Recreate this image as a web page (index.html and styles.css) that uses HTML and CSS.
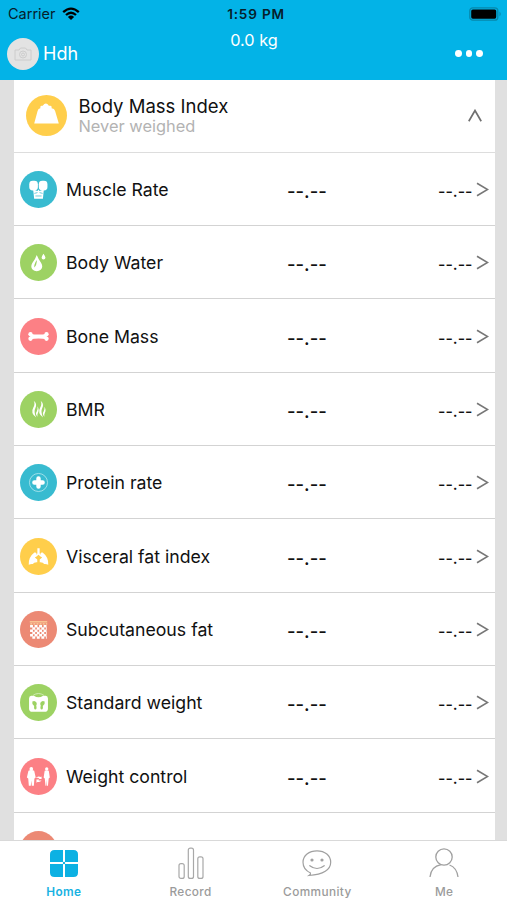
FILE: index.html
```html
<!DOCTYPE html>
<html lang="en">
<head>
    <meta charset="UTF-8">
    <meta name="viewport" content="width=device-width, initial-scale=1.0">
    <title>Home</title>
    <link rel="stylesheet" href="styles.css">
</head>
<body>
    <header class="header">
        <div class="status-bar">
            <div class="carrier">
                <span>Carrier</span>
                <svg width="18" height="14" viewBox="0 0 18 14">
                    <path d="M1.2 5.2 Q9 -2 16.8 5.2 M4 8 Q9 3.4 14 8" fill="none" stroke="#000" stroke-width="2.3"/>
                    <path d="M9 13 L5.9 9.9 Q9 7.3 12.1 9.9 Z"/>
                </svg>
            </div>
            <span class="time">1:59 PM</span>
            <svg class="battery" width="33" height="14" viewBox="0 0 33 14">
                <rect x=".8" y=".8" width="28" height="12.4" rx="3" fill="none" stroke="#0788ac" stroke-width="1.3"/>
                <rect x="2.2" y="2.4" width="25" height="9.3" rx="1.6"/>
                <path d="M30.5 4.5 Q33 7 30.5 9.5 Z" fill="#0788ac"/>
            </svg>
        </div>
        <div class="top-bar">
            <div class="user">
                <div class="avatar">
                    <svg width="18" height="14" viewBox="0 0 18 14" fill="none" stroke="#ccc">
                        <path d="M1 3 H5 L6.5 1 H11.5 L13 3 H17 V13 H1 Z"/>
                        <circle cx="9" cy="7.5" r="3.5"/>
                        <circle cx="9" cy="7.5" r="1.5"/>
                    </svg>
                </div>
                <span class="name">Hdh</span>
            </div>
            <span class="weight">0.0 kg</span>
            <div class="more"><i></i><i></i><i></i></div>
        </div>
    </header>

    <main class="content">
        <div class="card">
            <div class="summary">
                <svg class="summary-icon" viewBox="0 0 40 40">
                    <circle cx="20" cy="20" r="20" fill="#ffce4b"/>
                    <path d="M8 27.8 L11.3 15.5 Q11.8 13.2 14 13 V11.8 Q14 10.5 15.5 10.5 H16.3 Q19.5 6 22.3 10.5 H23.5 Q25 10.5 25 11.8 V13 Q27.8 13.2 28.4 15.5 L32 27.8 Z" fill="#fff"/>
                </svg>
                <div class="summary-text">
                    <h1>Body Mass Index</h1>
                    <p>Never weighed</p>
                </div>
                <svg class="arrow-up" width="14" height="13" viewBox="0 0 14 13">
                    <path d="M.8 12.2 L7 1.5 L13.2 12.2" fill="none" stroke="#707070" stroke-width="1.7"/>
                </svg>
            </div>
            <ul class="list" id="list">
                <li class="row">
                    <svg class="icon" viewBox="0 0 36 36">
                        <circle cx="18" cy="18" r="18" fill="#38bbd0"/>
                        <g fill="#fff">
                            <rect x="9" y="9.5" width="8.4" height="9.5" rx="3.4"/>
                            <rect x="18.3" y="9.5" width="8.4" height="9.5" rx="3.4"/>
                            <path d="M12.8 18 L17 19.5 L18 18 L19 19.5 L23.2 18 L22.3 27 H13.8 Z"/>
                        </g>
                        <path d="M14 21.8 L17 21 M19 21 L22 21.8 M15 24.3 H21" stroke="#38bbd0" stroke-width=".7"/>
                    </svg>
                    <span class="label">Muscle Rate</span>
                    <span class="value">--.--</span>
                    <span class="status">--.--</span>
                    <svg class="arrow" viewBox="0 0 13 15"><path d="M1 1.2 L11.6 7.5 L1 13.8"/></svg>
                </li>
                <li class="row">
                    <svg class="icon" viewBox="0 0 36 36">
                        <circle cx="18" cy="18" r="18" fill="#9dd263"/>
                        <path d="M16.3 10.7 Q18 15 20.6 18.5 C23.2 22.5 20.5 26.5 16.3 26.5 C12 26.5 9.5 22.5 12 18.5 Q14.8 15 16.3 10.7 Z M22.8 9.5 Q24.8 12.2 24.8 13.3 Q24.6 15 22.8 15 Q21.1 15 21 13.3 Q21 12.2 22.8 9.5 Z" fill="#fff"/>
                        <path d="M16.3 15.5 V17.5 Q16 21.5 14 22.8 Q13.3 20 16.3 15.5" fill="#9dd263"/>
                    </svg>
                    <span class="label">Body Water</span>
                    <span class="value">--.--</span>
                    <span class="status">--.--</span>
                    <svg class="arrow" viewBox="0 0 13 15"><path d="M1 1.2 L11.6 7.5 L1 13.8"/></svg>
                </li>
                <li class="row">
                    <svg class="icon" viewBox="0 0 36 36">
                        <circle cx="18" cy="18" r="18" fill="#fc8085"/>
                        <path d="M10 15.3 Q18 17 26 15.3 V20.7 Q18 19.4 10 20.7 Z" fill="#fff"/>
                        <g fill="#fff">
                            <circle cx="10.2" cy="15.8" r="2.1"/>
                            <circle cx="10.2" cy="20.2" r="2.1"/>
                            <circle cx="25.8" cy="15.8" r="2.1"/>
                            <circle cx="25.8" cy="20.2" r="2.1"/>
                        </g>
                    </svg>
                    <span class="label">Bone Mass</span>
                    <span class="value">--.--</span>
                    <span class="status">--.--</span>
                    <svg class="arrow" viewBox="0 0 13 15"><path d="M1 1.2 L11.6 7.5 L1 13.8"/></svg>
                </li>
                <li class="row">
                    <svg class="icon" viewBox="0 0 36 36">
                        <circle cx="18" cy="18" r="18" fill="#9dd263"/>
                        <g fill="#fff">
                            <path d="M13.3 9.5 Q17 12.5 15 16.5 Q13 20 15.8 25.8 Q9.8 21.5 13 16 Q15 12.5 13.3 9.5 Z"/>
                            <path d="M17 14.8 Q19 18.5 17.6 21 Q16.6 22.8 17 25 Q14.5 22.5 16.3 20 Q17.6 17.8 17 14.8 Z"/>
                            <path d="M20 9.5 Q23.7 12.5 21.7 16.5 Q19.7 20 22.5 25.8 Q16.5 21.5 19.7 16 Q21.7 12.5 20 9.5 Z"/>
                            <path d="M23.7 15.3 Q25.7 18.5 24.3 21 Q23.3 22.8 23.7 25 Q21.2 22.5 23 20 Q24.3 17.8 23.7 15.3 Z"/>
                        </g>
                    </svg>
                    <span class="label">BMR</span>
                    <span class="value">--.--</span>
                    <span class="status">--.--</span>
                    <svg class="arrow" viewBox="0 0 13 15"><path d="M1 1.2 L11.6 7.5 L1 13.8"/></svg>
                </li>
                <li class="row">
                    <svg class="icon" viewBox="0 0 36 36">
                        <circle cx="18" cy="18" r="18" fill="#38bbd0"/>
                        <circle cx="18" cy="18" r="8.8" fill="none" stroke="#c5edf3" stroke-width=".7"/>
                        <path d="M18 14 V22 M14 18 H22" stroke="#fff" stroke-width="4.3" stroke-linecap="round"/>
                    </svg>
                    <span class="label">Protein rate</span>
                    <span class="value">--.--</span>
                    <span class="status">--.--</span>
                    <svg class="arrow" viewBox="0 0 13 15"><path d="M1 1.2 L11.6 7.5 L1 13.8"/></svg>
                </li>
                <li class="row">
                    <svg class="icon" viewBox="0 0 36 36">
                        <circle cx="18" cy="18" r="18" fill="#ffce4b"/>
                        <path d="M16.9 10 H19.1 V15 L21.5 18 L20.8 18.7 L18 16.3 L15.2 18.7 L14.5 18 L16.9 15 Z" fill="#fff"/>
                        <path d="M14 14.2 Q16.6 13.6 16 17 L14.5 19 L16.8 21 V23.7 Q13.5 23.5 12.5 25.3 Q10.5 25 8.5 26 Q8.2 18.5 14 14.2 Z M22 14.2 Q19.4 13.6 20 17 L21.5 19 L19.2 21 V23.7 Q22.5 23.5 23.5 25.3 Q25.5 25 27.5 26 Q27.8 18.5 22 14.2 Z" fill="#fff"/>
                    </svg>
                    <span class="label">Visceral fat index</span>
                    <span class="value">--.--</span>
                    <span class="status">--.--</span>
                    <svg class="arrow" viewBox="0 0 13 15"><path d="M1 1.2 L11.6 7.5 L1 13.8"/></svg>
                </li>
                <li class="row">
                    <svg class="icon" viewBox="0 0 36 36">
                        <circle cx="18" cy="18" r="18" fill="#ec8974"/>
                        <path d="M9.5 10.5 H26.5" stroke="#f8c392" stroke-width="1.5"/>
                        <path d="M10 12.5 H26.5" stroke="#f8c392" stroke-width="1.7" stroke-dasharray="2 1"/>
                        <g stroke="#fff" stroke-width="2.5" stroke-dasharray="2.8 1.6">
                            <path d="M9.8 14.8 H26.5 M9.8 19.2 H26.5 M9.8 23.6 H26.5"/>
                            <path d="M12 17 H26 M12 21.4 H26 M12 25.8 H26"/>
                        </g>
                    </svg>
                    <span class="label">Subcutaneous fat</span>
                    <span class="value">--.--</span>
                    <span class="status">--.--</span>
                    <svg class="arrow" viewBox="0 0 13 15"><path d="M1 1.2 L11.6 7.5 L1 13.8"/></svg>
                </li>
                <li class="row">
                    <svg class="icon" viewBox="0 0 36 36">
                        <circle cx="18" cy="18" r="18" fill="#9dd263"/>
                        <path d="M11 11.5 H13.5 Q18 14.5 22.5 11.5 H25 Q27.2 11.5 27.2 14 V24 Q27.2 27 24 27 H12 Q8.8 27 8.8 24 V14 Q8.8 11.5 11 11.5 Z" fill="#fff"/>
                        <path d="M12.8 11 Q18 7.5 23.2 11" fill="none" stroke="#d8efc2" stroke-width=".8"/>
                        <path d="M12 17 Q14.5 15.5 16 18 Q16.8 19.5 15.8 21 Q16.8 24.8 14.8 24.8 Q13.3 24.8 13.8 21.5 Q11.3 19.5 12 17 Z M24 17 Q21.5 15.5 20 18 Q19.2 19.5 20.2 21 Q19.2 24.8 21.2 24.8 Q22.7 24.8 22.2 21.5 Q24.7 19.5 24 17 Z" fill="#9dd263"/>
                    </svg>
                    <span class="label">Standard weight</span>
                    <span class="value">--.--</span>
                    <span class="status">--.--</span>
                    <svg class="arrow" viewBox="0 0 13 15"><path d="M1 1.2 L11.6 7.5 L1 13.8"/></svg>
                </li>
                <li class="row">
                    <svg class="icon" viewBox="0 0 36 36">
                        <circle cx="18" cy="18" r="18" fill="#fc8085"/>
                        <g fill="#fff">
                            <circle cx="11" cy="10.6" r="1.8"/>
                            <path d="M8.2 12.5 Q11 11 13.8 12.5 L15.3 19 L14 20 L13.5 27 H11.5 L11 22 L10.5 27 H8.6 L8 20 L6.7 19 Z"/>
                            <circle cx="26" cy="10.6" r="1.6"/>
                            <path d="M24 12.5 Q26 11.5 28 12.5 L29 19 L27.9 20 L27.2 27 H26.3 L26 21 L25.7 27 H24.8 L24.1 20 L23 19 Z"/>
                            <path d="M15.4 19.5 Q17 17 20.5 18.5 L21 17.7 V20.5 H18 L19 19.7 Q17 19 15.4 19.5 Z M21 21.5 Q20 24 17 23.3 L16 24 V21 H18.7 L18 21.9 Q20 22.2 21 21.5 Z"/>
                        </g>
                    </svg>
                    <span class="label">Weight control</span>
                    <span class="value">--.--</span>
                    <span class="status">--.--</span>
                    <svg class="arrow" viewBox="0 0 13 15"><path d="M1 1.2 L11.6 7.5 L1 13.8"/></svg>
                </li>
                <li class="row">
                    <svg class="icon" viewBox="0 0 36 36">
                        <circle cx="18" cy="18" r="18" fill="#ec8974"/>
                    </svg>
                </li>
            </ul>
        </div>
    </main>

    <nav class="tabs">
        <a class="tab active">
            <svg width="28" height="32" viewBox="0 0 28 32">
                <g fill="#0cb1e3">
                    <path d="M4.5 3 H13 V15 H0 V7.5 Q0 3 4.5 3 Z"/>
                    <path d="M15 3 H23.5 Q28 3 28 7.5 V15 H15 Z"/>
                    <path d="M0 17 H13 V30 H4.5 Q0 30 0 25.5 Z"/>
                    <path d="M15 17 H28 V25.5 Q28 30 23.5 30 H15 Z"/>
                    <circle cx="14" cy="16" r="1.2"/>
                </g>
            </svg>
            <span>Home</span>
        </a>
        <a class="tab">
            <svg width="28" height="32" viewBox="0 0 28 32" fill="none" stroke="#a8a8a8" stroke-width="1.2">
                <rect x="2" y="16.6" width="5.2" height="14.8" rx="2"/>
                <rect x="11.3" y="1.2" width="5.2" height="30.2" rx="2"/>
                <rect x="20.8" y="9.8" width="5.2" height="21.6" rx="2"/>
            </svg>
            <span>Record</span>
        </a>
        <a class="tab">
            <svg width="30" height="32" viewBox="0 0 30 32" fill="none" stroke="#a0a0a0" stroke-width="1.2">
                <path d="M8.5 26 Q1 22.5 1 15.3 C1 8.5 7 3.8 15 3.8 C23 3.8 28.7 8.5 28.7 15.3 C28.7 22.5 21.5 27.8 7 28.5 Q8.8 27.3 8.5 26 Z"/>
                <path d="M7.8 18.7 Q15 24.3 22.2 18.7" stroke-linecap="round"/>
                <circle cx="10" cy="13" r="1" fill="#999"/>
                <circle cx="20" cy="13" r="1" fill="#999"/>
            </svg>
            <span>Community</span>
        </a>
        <a class="tab">
            <svg width="30" height="32" viewBox="0 0 30 32" fill="none" stroke="#a0a0a0" stroke-width="1.3">
                <circle cx="15" cy="10" r="8.2"/>
                <path d="M1 30 Q2 19.5 12 17.7 M20.5 18 Q27.7 20.5 29 30"/>
            </svg>
            <span>Me</span>
        </a>
    </nav>
</body>
</html>
```
FILE: styles.css
```css
* {
    box-sizing: border-box;
}
body {
    margin: 0;
    height: 100vh;
    display: flex;
    flex-direction: column;
    overflow: hidden;
    font-family: Inter, "Liberation Sans", sans-serif;
    font-feature-settings: "calt" 0;
    background-color: #e0e0e0;
    color: #111;
}
.header {
    flex: none;
    height: 79.5px;
    background-color: #03b3e7;
}
.status-bar {
    display: grid;
    grid-template-columns: 1fr auto 1fr;
    align-items: center;
    height: 27px;
    padding: 0 5px 0 8px;
    color: #06202b;
}
.carrier {
    display: flex;
    align-items: center;
    gap: 6px;
    font-size: 14.5px;
}
.time {
    font-size: 13.6px;
    font-weight: 600;
    letter-spacing: .8px;
    padding-left: 2px;
}
.battery {
    justify-self: end;
}
.top-bar {
    display: grid;
    grid-template-columns: 1fr auto 1fr;
    height: 52px;
    padding: 0 24px 0 7px;
    color: #fff;
}
.user {
    display: flex;
    align-items: center;
    gap: 4px;
    padding-top: 1px;
    font-size: 18px;
}
.avatar {
    display: flex;
    align-items: center;
    justify-content: center;
    width: 32px;
    height: 32px;
    border-radius: 50%;
    background-color: #e3e3e3;
}
.weight {
    font-size: 16.3px;
    line-height: 20px;
    padding: 3px 0 0 18px;
}
.more {
    display: flex;
    align-items: center;
    justify-content: flex-end;
    gap: 3.8px;
    padding-top: 1px;
}
.more i {
    width: 6.8px;
    height: 6.8px;
    border-radius: 50%;
    background-color: #fff;
}
.content {
    flex: 1;
    min-height: 0;
    overflow: hidden;
    padding: 0 12.5px 0 13.5px;
}
.card {
    background-color: #fff;
}
.summary {
    display: flex;
    align-items: center;
    height: 73.3px;
    padding: 0 13px 0 12px;
    border-bottom: 1px solid #ddd;
}
.summary-icon {
    width: 41px;
    height: 41px;
}
.summary-text {
    flex: 1;
    padding-left: 12px;
}
.summary-text h1 {
    margin: 0;
    font-size: 18.5px;
    font-weight: 400;
    line-height: 20px;
}
.summary-text p {
    margin: 0;
    font-size: 16.4px;
    line-height: 20px;
    color: #b3b3b3;
}
.list {
    margin: 0;
    padding: 0;
    list-style: none;
}
.row {
    display: grid;
    grid-template-columns: 37px 222px 1fr auto 13px;
    align-items: center;
    height: 73.33px;
    padding: 1px 6px 0 6px;
    border-bottom: 1.5px solid #d3d3d3;
}
.icon {
    width: 37px;
    height: 37px;
}
.label {
    padding-left: 9.5px;
    font-size: 17.7px;
}
.value {
    padding: 3px 0 0 8.5px;
    font-size: 18.5px;
    font-weight: 500;
}
.status {
    padding: 3px 3px 0 0;
    font-size: 16px;
    font-weight: 500;
}
.arrow {
    width: 13px;
    height: 15px;
    fill: none;
    stroke: #777;
    stroke-width: 1.6;
}
.tabs {
    flex: none;
    display: grid;
    grid-template-columns: repeat(4, 1fr);
    height: 60px;
    border-top: 1px solid #d9d9d9;
    background-color: #fff;
}
.tab {
    display: flex;
    flex-direction: column;
    align-items: center;
    padding: 6px 0 0 1px;
    font-size: 11.8px;
    font-weight: 500;
    line-height: 16px;
    letter-spacing: .4px;
    color: #9b9b9b;
}
.tab span {
    margin-top: 5px;
}
.tab.active {
    color: #18b2e2;
    font-weight: 600;
}
```
